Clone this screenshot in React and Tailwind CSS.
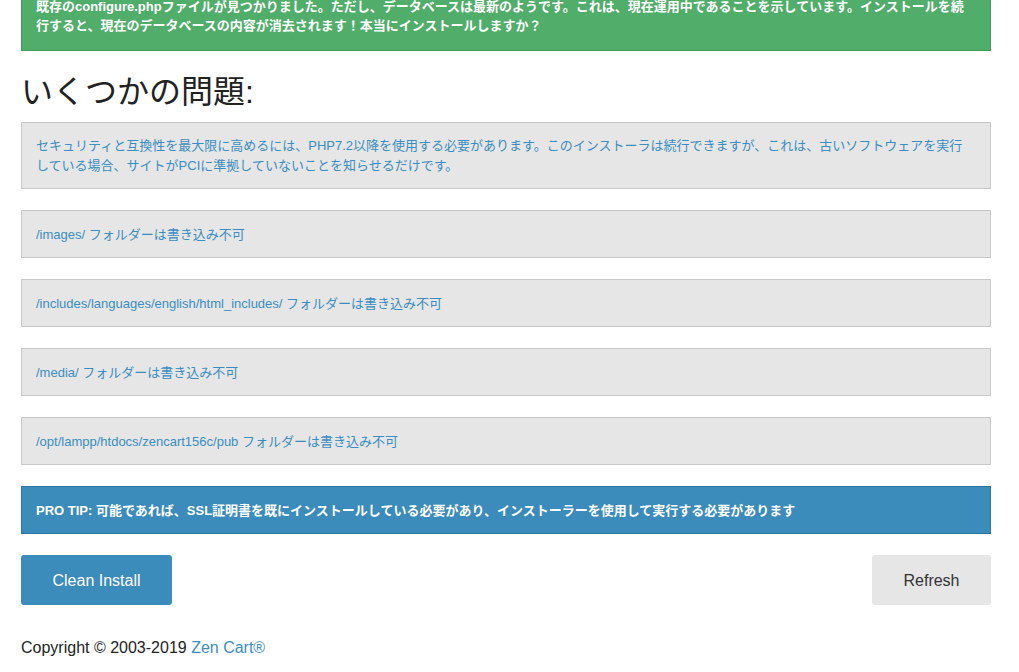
export default function App() {
  const font = { fontFamily: '"Liberation Sans", "Noto Sans CJK JP", sans-serif' };
  const warnings = [
    "/images/ フォルダーは書き込み不可",
    "/includes/languages/english/html_includes/ フォルダーは書き込み不可",
    "/media/ フォルダーは書き込み不可",
    "/opt/lampp/htdocs/zencart156c/pub フォルダーは書き込み不可",
  ];
  return (
    <div className="min-h-[672px] bg-white overflow-hidden" style={font}>
      <div className="mx-[21px] w-[970px]">
        <div className="-mt-[18px] bg-[#51ad6a] border border-[#3f9a58] pl-[14px] pr-[22px] pt-[14px] pb-[15px] text-[13px] leading-[19px] text-white font-bold">
          既存のconfigure.phpファイルが見つかりました。ただし、データベースは最新のようです。これは、現在運用中であることを示しています。インストールを続行すると、現在のデータベースの内容が消去されます！本当にインストールしますか？
        </div>
        <h1 className="mt-[21px] text-[32px] leading-[40px] text-[#222] font-normal">いくつかの問題:</h1>
        <div className="mt-[10px] flex flex-col gap-[21px]">
          <div className="bg-[#e6e6e6] border border-[#c8c8c8] pl-[14px] pr-[20px] pt-[13px] pb-[12px] text-[13px] leading-[20px] text-[#3a8dc1]">
            セキュリティと互換性を最大限に高めるには、PHP7.2以降を使用する必要があります。このインストーラは続行できますが、これは、古いソフトウェアを実行している場合、サイトがPCIに準拠していないことを知らせるだけです。
          </div>
          {warnings.map((w) => (
            <div key={w} className="bg-[#e6e6e6] border border-[#c8c8c8] px-[14px] pt-[2px] h-[48px] flex items-center text-[13px] text-[#3a8dc1]">
              {w}
            </div>
          ))}
          <div className="bg-[#3b8bbb] border border-[#2e74a0] px-[14px] pt-[2px] h-[48px] flex items-center text-[13px] text-white font-bold">
            PRO TIP: 可能であれば、SSL証明書を既にインストールしている必要があり、インストーラーを使用して実行する必要があります
          </div>
        </div>
        <div className="mt-[21px] flex justify-between">
          <button className="w-[151px] h-[50px] pt-[2px] rounded-[3px] bg-[#3b8bbb] text-white text-[16px]">Clean Install</button>
          <button className="w-[119px] h-[50px] pt-[2px] rounded-[3px] bg-[#e6e6e6] text-[#333] text-[16px]">Refresh</button>
        </div>
        <div className="mt-[33px] text-[16px] text-[#222] leading-[20px]">
          Copyright © 2003-2019 <span className="text-[#3a8dc1]">Zen Cart®</span>
        </div>
      </div>
    </div>
  );
}
